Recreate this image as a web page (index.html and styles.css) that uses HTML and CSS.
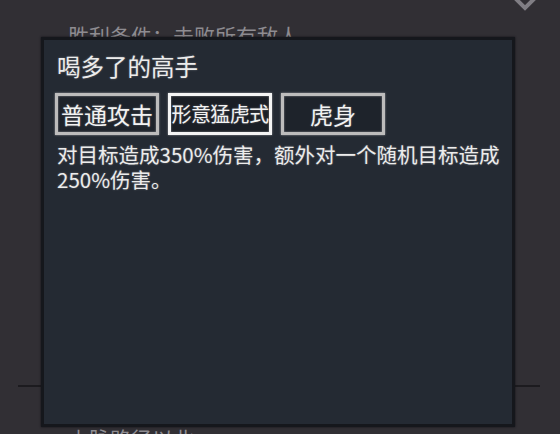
FILE: index.html
```html
<!DOCTYPE html>
<html lang="zh">
<head>
    <meta charset="UTF-8">
    <title>技能详情</title>
    <link rel="stylesheet" href="styles.css">
</head>
<body>

    <div class="scene">
        <!-- Level info behind the popup -->
        <div class="level-info">
            <div class="goal">胜利条件：击败所有敌人</div>
            <div class="divider"></div>
            <div class="hint">山脉路径以北</div>
        </div>

        <svg class="collapse" width="30" height="14" viewBox="0 0 30 14">
            <path d="M5 -2 L15 8 L25 -2" fill="none" stroke="#807e84" stroke-width="4"/>
        </svg>

        <!-- Skill popup -->
        <div class="popup">
            <div class="unit-name">喝多了的高手</div>
            <div class="skill-tabs">
                <button class="tab">普通攻击</button>
                <button class="tab tab-active tab-long">形意猛虎式</button>
                <button class="tab">虎身</button>
            </div>
            <p class="skill-desc">对目标造成350%伤害，额外对一个随机目标造成250%伤害。</p>
        </div>
    </div>

</body>
</html>
```

FILE: styles.css
```css
body, html {
    margin: 0;
    width: 100%;
    height: 100%;
    background: #312f34;
    overflow: hidden;
    font-family: "Noto Sans CJK SC", "Noto Sans", sans-serif;
}

.scene {
    position: relative;
    width: 560px;
    height: 434px;
}

/* Level info (mostly covered) */
.level-info {
    display: flex;
    flex-direction: column;
    padding: 21px 20px 0 18px;
    color: #8e8c91;
}

.goal {
    font-size: 21px;
    line-height: 28px;
    padding-left: 50px;
}

.divider {
    height: 2px;
    background: #1c1b1f;
    margin-top: 336px;
}

.hint {
    font-size: 21px;
    line-height: 28px;
    padding-left: 50px;
    margin-top: 37px;
}

.collapse {
    position: absolute;
    top: 0;
    left: 510px;
}

/* Popup */
.popup {
    position: absolute;
    left: 41px;
    top: 37px;
    width: 457px;
    height: 384px;
    background: #242a33;
    border: 3px solid #15171c;
    box-shadow: 0 0 2px #101114;
    padding: 0 0 0 11px;
    color: #ececec;
    text-shadow: 0 0 2px rgba(255, 255, 255, 0.35);
}

.unit-name {
    font-size: 23.5px;
    line-height: 30px;
    margin-top: 11px;
    padding-left: 2px;
}

.skill-tabs {
    display: flex;
    gap: 9px;
    margin-top: 12px;
}

.tab {
    width: 104px;
    height: 42px;
    padding: 0;
    background: #1e232b;
    border: 3px solid #bdbcbc;
    box-shadow: 0 0 2px rgba(220, 220, 220, 0.6), inset 0 0 2px rgba(220, 220, 220, 0.6);
    color: #f2f2f2;
    font-family: inherit;
    font-size: 23px;
    line-height: 1;
    text-shadow: inherit;
}

.tab-active {
    border-color: #f4f4f4;
    background: #1a1e25;
}

.tab-long {
    font-size: 20px;
    letter-spacing: -0.6px;
}

.skill-desc {
    margin: 7px 0 0 2px;
    font-size: 20.5px;
    line-height: 25px;
    width: 455px;
}
```
